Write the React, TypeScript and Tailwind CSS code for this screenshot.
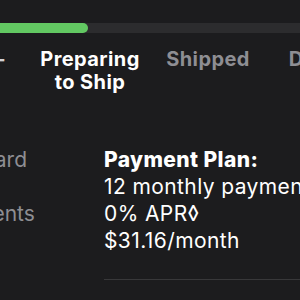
import React from "react";

export default function App() {
  const steps = [
    { label: "-", active: false },
    { label: "Preparing to Ship", active: true },
    { label: "Shipped", active: false },
    { label: "Delivered", active: false },
  ];

  return (
    <div className="w-[300px] h-[300px] overflow-hidden bg-[#1c1c1e] font-['Inter',sans-serif] antialiased">
      {/* progress */}
      <div className="pt-[23px] -ml-[10px]">
        <div className="h-[10px] w-[340px] rounded-full bg-[#2c2c2e]">
          <div className="h-full w-[98px] rounded-full bg-[#62c862]" />
        </div>
      </div>

      {/* steps */}
      <div className="mt-[15px] -ml-[87px] grid grid-cols-[118px_118px_118px_140px] w-[494px]">
        {steps.map((s, i) => (
          <div
            key={i}
            className={
              "text-[20px] leading-[23px] font-bold tracking-[0.4px] " +
              (i === 0
                ? "text-right pr-[25px] text-[#d1d1d6]"
                : s.active
                ? "text-center text-white"
                : "text-center text-[#8e8e93]")
            }
          >
            {s.label === "Preparing to Ship" ? (
              <>
                Preparing
                <br />
                to Ship
              </>
            ) : (
              s.label
            )}
          </div>
        ))}
      </div>

      {/* payment details */}
      <div className="mt-[52px] flex">
        <div className="-ml-[84px] w-[188px] shrink-0 text-[21px] leading-[27px] text-[#8e8e93]">
          <div>Apple Card</div>
          <div>Monthly</div>
          <div>Installments</div>
        </div>
        <div className="flex-1 min-w-0 whitespace-nowrap text-[21px] leading-[27px] tracking-[0.4px] text-white">
          <div className="font-extrabold">Payment Plan:</div>
          <div>12 monthly payments</div>
          <div>0% APR&#x25CA;</div>
          <div>$31.16/month</div>
          <div className="mt-[25px] h-px bg-[#38383a]" />
        </div>
      </div>
    </div>
  );
}
